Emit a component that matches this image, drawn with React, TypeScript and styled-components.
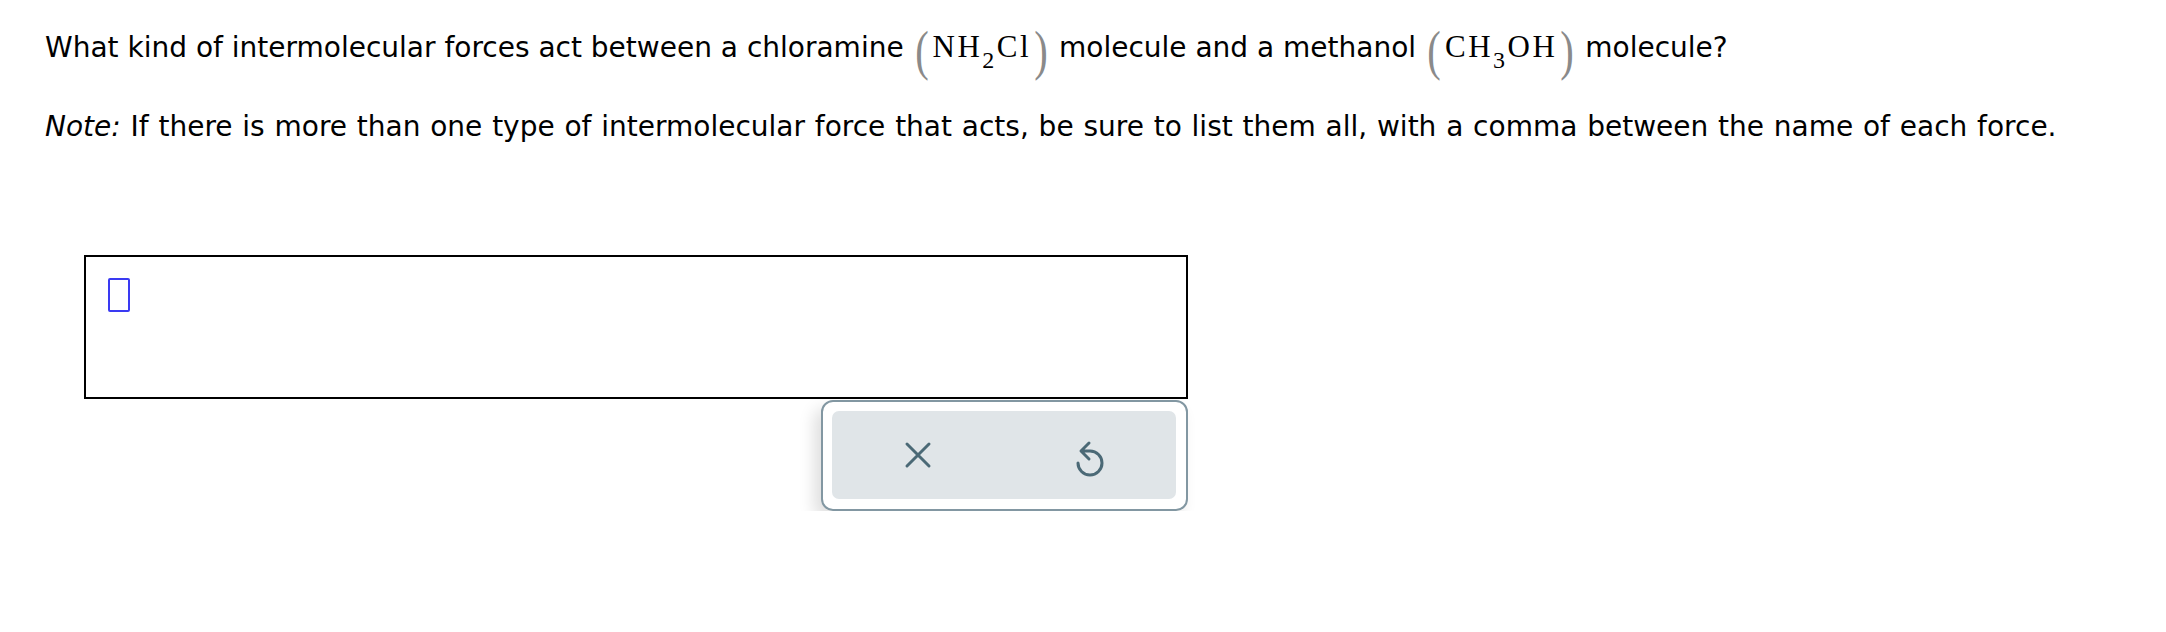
import React from 'react';
import styled, { createGlobalStyle } from 'styled-components';

const GlobalStyle = createGlobalStyle`
  body {
    margin: 0;
    background: #ffffff;
    font-family: "DejaVu Sans", Verdana, sans-serif;
    color: #000000;
  }
`;

const Page = styled.div`
  padding: 19px 0 0 45px;
`;

const QuestionLine = styled.p`
  margin: 0;
  font-size: 28px;
  line-height: 56px;
  height: 56px;
  white-space: nowrap;
`;

const NoteLine = styled.p`
  margin: 32px 0 0 0;
  font-size: 28px;
  line-height: 40px;
  word-spacing: 0.9px;
  white-space: nowrap;
`;

const Chem = styled.span`
  font-family: "Liberation Serif", "Times New Roman", serif;
  font-size: 31px;
  letter-spacing: 2.5px;
  margin: 0 1px 0 2px;
`;

const Paren = styled.span`
  display: inline-block;
  font-family: "Liberation Serif", "Times New Roman", serif;
  font-size: 54px;
  font-weight: 300;
  color: #8a8a8a;
  line-height: 1;
  vertical-align: -12px;
  transform: scaleX(0.75);
`;

const Sub = styled.sub`
  font-size: 24px;
  vertical-align: -11px;
  line-height: 0;
`;

const AnswerBox = styled.div`
  margin: 108px 0 0 39px;
  width: 1104px;
  height: 144px;
  box-sizing: border-box;
  border: 2px solid #000000;
  padding: 21px 0 0 22px;
`;

const Cursor = styled.div`
  width: 22px;
  height: 34px;
  box-sizing: border-box;
  border: 2px solid #3a3af2;
  border-radius: 2px;
`;

const PanelRow = styled.div`
  width: 1143px;
  display: flex;
  justify-content: flex-end;
  margin-top: 1px;
`;

const ButtonPanel = styled.div`
  width: 367px;
  height: 111px;
  box-sizing: border-box;
  border: 2px solid #8297a2;
  border-radius: 12px;
  background: #ffffff;
  padding: 9px 10px 10px 9px;
  box-shadow: -7px 8px 16px rgba(0, 0, 0, 0.13);
`;

const ButtonTray = styled.div`
  display: flex;
  height: 100%;
  background: #e0e5e8;
  border-radius: 7px;
`;

const IconButton = styled.button`
  flex: 1;
  display: flex;
  align-items: center;
  justify-content: center;
  border: none;
  background: transparent;
  padding: 0;
  cursor: pointer;
  color: #4b6976;
`;

const CloseIcon = () => (
  <svg width="28" height="28" viewBox="0 0 28 28" fill="none">
    <path d="M3 3 L25 25 M25 3 L3 25" stroke="currentColor" strokeWidth="3" strokeLinecap="round" />
  </svg>
);

const UndoIcon = () => (
  <svg width="32" height="40" viewBox="0 0 32 40" fill="none" style={{ marginTop: 8 }}>
    <path
      d="M16 12 A12 12 0 1 1 4 24 M16 12 H8 M15 4 L7 12 L15 20"
      stroke="currentColor"
      strokeWidth="3"
      strokeLinecap="round"
      strokeLinejoin="round"
    />
  </svg>
);

export default function App() {
  return (
    <>
      <GlobalStyle />
      <Page>
        <QuestionLine>
          What kind of intermolecular forces act between a chloramine{' '}
          <Paren>(</Paren>
          <Chem>
            NH<Sub>2</Sub>Cl
          </Chem>
          <Paren>)</Paren> molecule and a methanol{' '}
          <Paren>(</Paren>
          <Chem>
            CH<Sub>3</Sub>OH
          </Chem>
          <Paren>)</Paren> molecule?
        </QuestionLine>
        <NoteLine>
          <i>Note:</i> If there is more than one type of intermolecular force that acts, be sure to list them all, with a
          comma between the name of each force.
        </NoteLine>
        <AnswerBox>
          <Cursor />
        </AnswerBox>
        <PanelRow>
          <ButtonPanel>
            <ButtonTray>
              <IconButton aria-label="Clear">
                <CloseIcon />
              </IconButton>
              <IconButton aria-label="Undo">
                <UndoIcon />
              </IconButton>
            </ButtonTray>
          </ButtonPanel>
        </PanelRow>
      </Page>
    </>
  );
}
